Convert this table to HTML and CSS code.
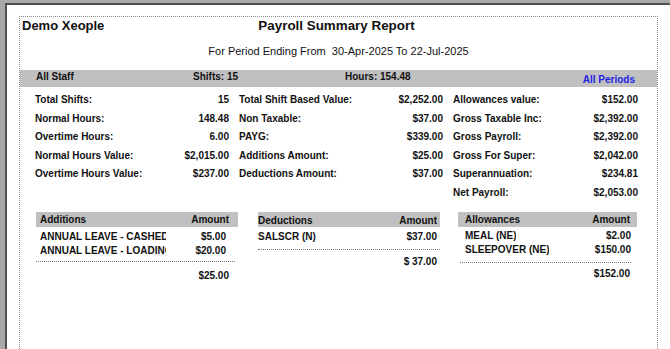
FILE: index.html
```html
<!DOCTYPE html>
<html>
<head>
<meta charset="utf-8">
<link rel="stylesheet" href="styles.css">
</head>
<body>
<div class="frame">
  <div class="report">
    <header class="head">
      <div class="company">Demo Xeople</div>
      <div class="title">Payroll Summary Report</div>
      <div></div>
    </header>
    <div class="period">For Period Ending From&nbsp; 30-Apr-2025 To 22-Jul-2025</div>
    <div class="band">
      <span>All Staff</span>
      <span>Shifts: 15</span>
      <span>Hours: 154.48</span>
      <span class="periods">All Periods</span>
    </div>
    <div class="summary">
      <div class="col">
        <span>Total Shifts:</span><span class="v">15</span>
        <span>Normal Hours:</span><span class="v">148.48</span>
        <span>Overtime Hours:</span><span class="v">6.00</span>
        <span>Normal Hours Value:</span><span class="v">$2,015.00</span>
        <span>Overtime Hours Value:</span><span class="v">$237.00</span>
      </div>
      <div class="col">
        <span>Total Shift Based Value:</span><span class="v">$2,252.00</span>
        <span>Non Taxable:</span><span class="v">$37.00</span>
        <span>PAYG:</span><span class="v">$339.00</span>
        <span>Additions Amount:</span><span class="v">$25.00</span>
        <span>Deductions Amount:</span><span class="v">$37.00</span>
      </div>
      <div class="col">
        <span>Allowances value:</span><span class="v">$152.00</span>
        <span>Gross Taxable Inc:</span><span class="v">$2,392.00</span>
        <span>Gross Payroll:</span><span class="v">$2,392.00</span>
        <span>Gross For Super:</span><span class="v">$2,042.00</span>
        <span>Superannuation:</span><span class="v">$234.81</span>
        <span>Net Payroll:</span><span class="v">$2,053.00</span>
      </div>
    </div>
    <div class="tables">
      <section class="tbl additions">
        <div class="thead"><span>Additions</span><span>Amount</span></div>
        <div class="rows">
          <div class="row"><span class="name">ANNUAL LEAVE - CASHED</span><span>$5.00</span></div>
          <div class="row"><span class="name">ANNUAL LEAVE - LOADING</span><span>$20.00</span></div>
        </div>
        <div class="total">$25.00</div>
      </section>
      <section class="tbl deductions">
        <div class="thead"><span>Deductions</span><span>Amount</span></div>
        <div class="rows">
          <div class="row"><span class="name">SALSCR (N)</span><span>$37.00</span></div>
        </div>
        <div class="total">$ 37.00</div>
      </section>
      <section class="tbl allowances">
        <div class="thead"><span>Allowances</span><span>Amount</span></div>
        <div class="rows">
          <div class="row"><span class="name">MEAL (NE)</span><span>$2.00</span></div>
          <div class="row"><span class="name">SLEEPOVER (NE)</span><span>$150.00</span></div>
        </div>
        <div class="total">$152.00</div>
      </section>
    </div>
  </div>
</div>
</body>
</html>
```

FILE: styles.css
```css
html, body {
  margin: 0;
  padding: 0;
}
body {
  background: #a9a9a9;
  font-family: "Liberation Sans", Arial, sans-serif;
  color: #111;
  height: 349px;
  overflow: hidden;
}
.frame {
  margin: 3px 0 0 5px;
  border-top: 2px solid #505050;
  border-left: 2px solid #505050;
  background: #fff;
  height: 333px;
  padding: 11px 0 0 12px;
}
.report {
  width: 639px;
  box-sizing: border-box;
  border: 1px dotted #8c8c8c;
  border-bottom: 0;
  height: 333px;
}
.head {
  display: grid;
  grid-template-columns: 1fr auto 1fr;
  font-weight: bold;
  line-height: 15px;
  padding-top: 1px;
}
.company {
  font-size: 13px;
  padding-left: 2px;
}
.title {
  font-size: 13.4px;
  margin-left: -4px;
}
.period {
  text-align: center;
  font-size: 11px;
  line-height: 13px;
  margin-top: 12px;
}
.band {
  display: grid;
  grid-template-columns: 157px 152px 1fr auto;
  margin-top: 12px;
  height: 17px;
  box-sizing: border-box;
  background: #c0c0c0;
  padding: 1px 22px 0 16px;
  font-size: 10px;
  font-weight: bold;
  line-height: 12px;
}
.band .periods {
  color: #1f1fe6;
  padding-top: 2.5px;
}
.summary {
  display: grid;
  grid-template-columns: 194px 204px 185px;
  column-gap: 10px;
  padding-left: 15px;
  margin-top: 4px;
  font-size: 10px;
  font-weight: bold;
}
.col {
  display: grid;
  grid-template-columns: 1fr auto;
  grid-auto-rows: 18.5px;
  align-items: center;
  line-height: 12px;
}
.col .v {
  text-align: right;
}
.tables {
  display: flex;
  align-items: flex-start;
  margin-top: 10px;
  padding-left: 16px;
  font-size: 10px;
  font-weight: bold;
}
.tbl .thead {
  display: flex;
  justify-content: space-between;
  background: #c0c0c0;
  height: 15px;
  line-height: 15px;
}
.tbl .row {
  display: flex;
  justify-content: space-between;
  line-height: 14px;
}
.tbl .name {
  white-space: nowrap;
  overflow: hidden;
}
.tbl .total {
  text-align: right;
  line-height: 14px;
}
.additions {
  width: 202px;
}
.additions .thead {
  padding: 0 9px 0 4px;
}
.additions .rows {
  padding: 3px 9px 3px 4px;
  margin-right: 3px;
  border-bottom: 1px dotted #7a7a7a;
}
.additions .name {
  width: 126px;
}
.additions .total {
  padding: 7px 9px 0 0;
}
.deductions {
  width: 182px;
  margin-left: 20px;
}
.deductions .thead {
  padding: 1px 3px 0 0;
  height: 14px;
}
.deductions .rows {
  padding: 3px 3px 5px 0;
  border-bottom: 1px dotted #7a7a7a;
}
.deductions .total {
  padding: 5px 3px 0 0;
}
.allowances {
  width: 179px;
  margin-left: 18px;
}
.allowances .thead {
  padding: 0 7px;
}
.allowances .rows {
  padding: 2px 0 5px 5px;
  margin: 0 6px 0 2px;
  border-bottom: 1px dotted #7a7a7a;
}
.allowances .row {
  line-height: 14px;
}
.allowances .total {
  padding: 4px 7px 0 0;
}
```
